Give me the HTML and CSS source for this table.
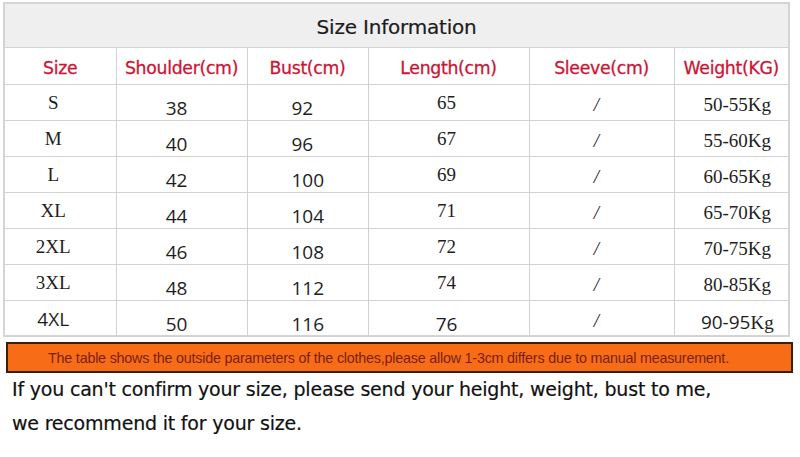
FILE: index.html
```html
<!DOCTYPE html>
<html>
<head>
<meta charset="utf-8">
<link rel="stylesheet" href="styles.css">
</head>
<body>
<div class="page">
  <table class="size-table">
    <colgroup>
      <col class="c1"><col class="c2"><col class="c3"><col class="c4"><col class="c5"><col class="c6">
    </colgroup>
    <tr class="title-row"><th colspan="6">Size Information</th></tr>
    <tr class="head-row">
      <th>Size</th><th>Shoulder(cm)</th><th>Bust(cm)</th><th>Length(cm)</th><th>Sleeve(cm)</th><th>Weight(KG)</th>
    </tr>
    <tr><td class="serif sz">S</td><td class="sans num">38</td><td class="sans bust">92</td><td class="serif len">65</td><td class="serif sl">/</td><td class="serif wt">50-55Kg</td></tr>
    <tr><td class="serif sz">M</td><td class="sans num">40</td><td class="sans bust">96</td><td class="serif len">67</td><td class="serif sl">/</td><td class="serif wt">55-60Kg</td></tr>
    <tr><td class="serif sz">L</td><td class="sans num">42</td><td class="sans bust">100</td><td class="serif len">69</td><td class="serif sl">/</td><td class="serif wt">60-65Kg</td></tr>
    <tr><td class="serif sz">XL</td><td class="sans num">44</td><td class="sans bust">104</td><td class="serif len">71</td><td class="serif sl">/</td><td class="serif wt">65-70Kg</td></tr>
    <tr><td class="serif sz">2XL</td><td class="sans num">46</td><td class="sans bust">108</td><td class="serif len">72</td><td class="serif sl">/</td><td class="serif wt">70-75Kg</td></tr>
    <tr><td class="serif sz">3XL</td><td class="sans num">48</td><td class="sans bust">112</td><td class="serif len">74</td><td class="serif sl">/</td><td class="serif wt">80-85Kg</td></tr>
    <tr><td class="sans sz">4XL</td><td class="sans num">50</td><td class="sans bust">116</td><td class="sans len">76</td><td class="serif sl">/</td><td class="sans wt">90-95<span class="serif">Kg</span></td></tr>
  </table>
  <div class="notice">The table shows the outside parameters of the clothes,please allow 1-3cm differs due to manual measurement.</div>
  <p class="advice first">If you can't confirm your size, please send your height, weight, bust to me,</p>
  <p class="advice">we recommend it for your size.</p>
</div>
</body>
</html>
```

FILE: styles.css
```css
html, body {
  margin: 0;
  padding: 0;
  background: #ffffff;
}

.page {
  width: 800px;
  height: 457px;
  padding: 2px 0 0 3px;
  box-sizing: border-box;
  overflow: hidden;
}

.size-table {
  border-collapse: collapse;
  width: 785px;
  table-layout: fixed;
  border: 2px solid #d4d4d4;
}

.c1 { width: 112px; }
.c2 { width: 131px; }
.c3 { width: 121px; }
.c4 { width: 161px; }
.c5 { width: 145px; }
.c6 { width: 115px; }

.size-table th,
.size-table td {
  border: 1px solid #d2d2d2;
  padding: 0;
  text-align: center;
  vertical-align: middle;
  color: #1e1e1e;
  line-height: 22px;
}

.size-table tr { height: 36px; }
.size-table tr.title-row { height: 44px; }
.size-table tr.head-row { height: 37px; }

.title-row th {
  background: #efefef;
  font-family: "DejaVu Sans", sans-serif;
  font-weight: normal;
  font-size: 20px;
  letter-spacing: -0.2px;
  color: #1c1c1c;
  padding-top: 4px;
  -webkit-text-stroke: 0.2px #1c1c1c;
}

.head-row th {
  font-family: "DejaVu Sans", sans-serif;
  font-weight: normal;
  font-size: 17.3px;
  letter-spacing: -0.3px;
  color: #cc1436;
  padding-top: 4px;
  -webkit-text-stroke: 0.3px #cc1436;
}

.serif {
  font-family: "Liberation Serif", "Times New Roman", serif;
  font-size: 19px;
}

.sans {
  font-family: "Open Sans", "Liberation Sans", sans-serif;
  font-size: 19px;
  color: #2a2a2a;
}

.size-table .sz { padding-right: 14px; padding-top: 2px; }
.size-table .num { padding-right: 10px; padding-top: 12px; }
.size-table .bust { text-align: left; padding-left: 44px; padding-top: 12px; }
.size-table .len { padding-right: 4px; padding-top: 2px; }
.size-table .len.sans { padding-top: 12px; }
.size-table .sl { padding-right: 10px; padding-top: 6px; font-style: italic; }
.size-table .wt { padding-left: 12px; padding-top: 6px; }
.size-table .wt.sans { padding-top: 10px; }
.wt .serif { font-size: 19px; }

.notice {
  margin: 5px 0 0 3px;
  width: 783px;
  height: 27px;
  box-sizing: content-box;
  padding-right: 0;
  background: #f76d17;
  border: 2px solid #3a1d0c;
  color: #7b1e12;
  font-family: "Liberation Sans", Arial, sans-serif;
  font-size: 14.3px;
  line-height: 28px;
  text-indent: -22px;
  text-align: center;
  letter-spacing: -0.2px;
}

.advice {
  margin: 0;
  padding-left: 9px;
  font-family: "DejaVu Sans", sans-serif;
  font-size: 19px;
  color: #111111;
  line-height: 34px;
  letter-spacing: -0.2px;
  -webkit-text-stroke: 0.2px #111111;
}

.advice.first {
  margin-top: -1px;
}
```
